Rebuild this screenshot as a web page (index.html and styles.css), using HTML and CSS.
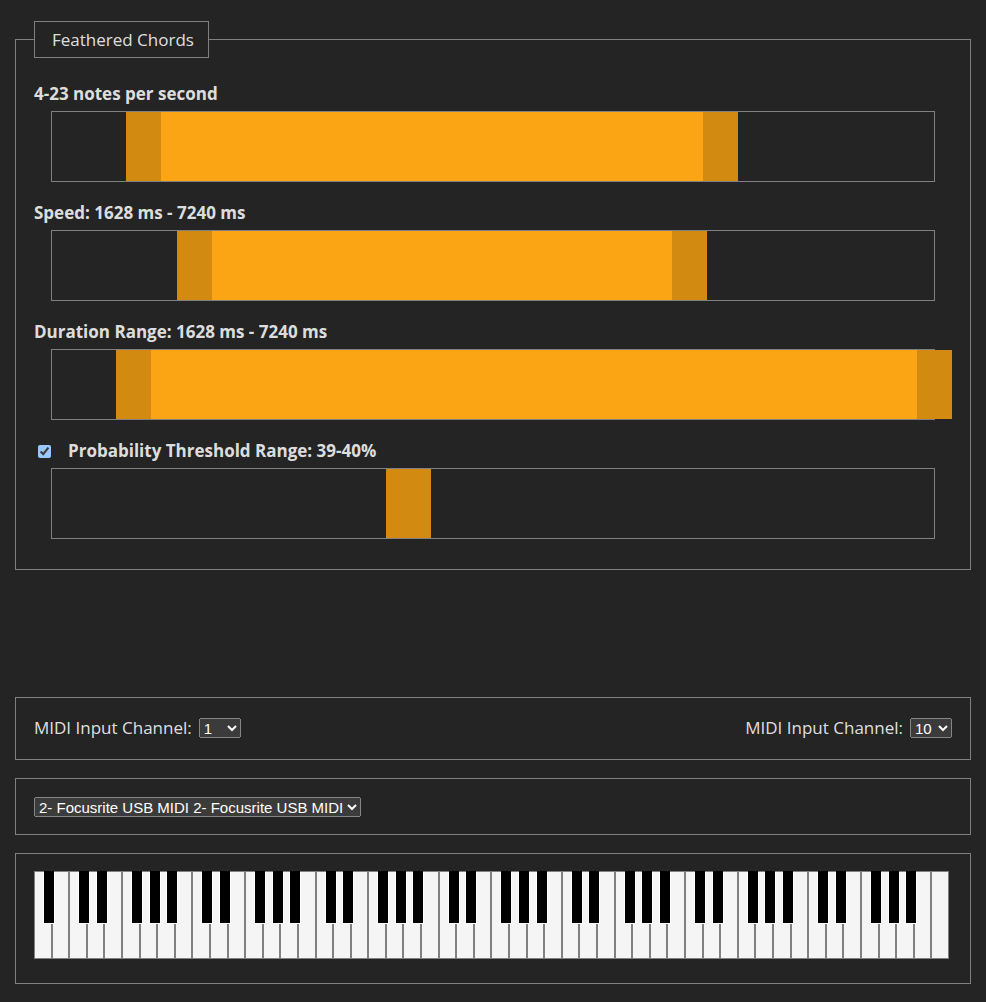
FILE: index.html
```html
<!DOCTYPE html>
<html lang="en">
<head>
<meta charset="utf-8">
<title>Feathered Chords</title>
<link rel="stylesheet" href="styles.css">
</head>
<body>
<main class="app">
  <fieldset class="panel chords">
    <legend class="chords-title">Feathered Chords</legend>

    <section class="control">
      <h2 class="control-label">4-23 notes per second</h2>
      <div class="track">
        <div class="range">
          <div class="fill" style="left: 8.3%; width: 67.9%"></div>
          <input class="thumb" type="range" aria-label="Minimum notes per second" min="0" max="1000" value="86">
          <input class="thumb" type="range" aria-label="Maximum notes per second" min="0" max="1000" value="753">
        </div>
      </div>
    </section>

    <section class="control">
      <h2 class="control-label">Speed: 1628 ms - 7240 ms</h2>
      <div class="track">
        <div class="range">
          <div class="fill" style="left: 14%; width: 58.8%"></div>
          <input class="thumb" type="range" aria-label="Minimum speed" min="0" max="1000" value="145">
          <input class="thumb" type="range" aria-label="Maximum speed" min="0" max="1000" value="717">
        </div>
      </div>
    </section>

    <section class="control">
      <h2 class="control-label">Duration Range: 1628 ms - 7240 ms</h2>
      <div class="track">
        <div class="range">
          <div class="fill" style="left: 7.2%; width: 92.7%"></div>
          <input class="thumb" type="range" aria-label="Minimum duration" min="0" max="1000" value="74">
          <input class="thumb" type="range" aria-label="Maximum duration" min="0" max="1000" value="1000">
        </div>
      </div>
    </section>

    <section class="control">
      <h2 class="control-label">
        <input class="toggle" type="checkbox" id="probability" checked>
        <label for="probability">Probability Threshold Range: 39-40%</label>
      </h2>
      <div class="track">
        <div class="range">
          <div class="fill" style="left: 37.2%; width: 4.8%"></div>
          <input class="thumb" type="range" aria-label="Minimum probability" min="0" max="1000" value="386">
          <input class="thumb" type="range" aria-label="Maximum probability" min="0" max="1000" value="398">
        </div>
      </div>
    </section>
  </fieldset>

  <section class="panel channels">
    <div class="channel">
      <label for="channel-a">MIDI Input Channel:</label>
      <select class="select channel-select" id="channel-a"><option>1</option><option>10</option></select>
    </div>
    <div class="channel">
      <label for="channel-b">MIDI Input Channel:</label>
      <select class="select channel-select" id="channel-b"><option>1</option><option selected>10</option></select>
    </div>
  </section>

  <section class="panel device">
    <select class="select" aria-label="MIDI device"><option>2- Focusrite USB MIDI 2- Focusrite USB MIDI</option></select>
  </section>

  <section class="panel piano">
    <div class="keyboard" id="keyboard"></div>
  </section>
</main>
<script src="keyboard.js"></script>
</body>
</html>
```

FILE: styles.css
```css
* {
  box-sizing: border-box;
}

:root {
  color-scheme: dark;
  --line: #808080;
}

body {
  margin: 0;
  background: #242424;
  color: rgba(255, 255, 255, 0.87);
  font-family: "Segoe UI", "Open Sans", "Noto Sans", sans-serif;
  font-size: 17px;
  line-height: 24px;
}

.app {
  display: flex;
  flex-direction: column;
  gap: 18px;
  padding: 21px 15px 18px;
}

.panel {
  margin: 0;
  border: 1px solid var(--line);
  padding: 17px 18px;
}

.chords {
  min-width: 0;
  margin-bottom: 109px;
  padding: 24px 18px 30px;
}

.chords-title {
  border: 1px solid var(--line);
  padding: 6px 14px 5px 17px;
}

.control + .control {
  margin-top: 19px;
}

.control-label {
  display: flex;
  align-items: center;
  margin: 0 0 5px;
  font-size: 17px;
  font-weight: 700;
}

.toggle {
  width: 13px;
  height: 13px;
  margin: 0 17px 0 4px;
}

.track {
  height: 71px;
  margin: 0 17px;
  border: 1px solid var(--line);
}

.range {
  position: relative;
  height: 100%;
  margin-right: -18px;
}

.fill {
  position: absolute;
  top: 0;
  bottom: 0;
  background: #fca514;
}

.thumb {
  position: absolute;
  inset: 0;
  width: 100%;
  height: 100%;
  margin: 0;
  appearance: none;
  background: transparent;
  pointer-events: none;
}

.thumb::-webkit-slider-runnable-track {
  height: 100%;
}

.thumb::-webkit-slider-thumb {
  appearance: none;
  width: 35px;
  height: 100%;
  border: 0;
  border-radius: 0;
  background: #d28b10;
  cursor: ew-resize;
  pointer-events: auto;
}

.channels {
  display: flex;
  justify-content: space-between;
  padding: 18px 18px 19px;
}

.channel {
  display: flex;
  align-items: center;
  gap: 7px;
}

.select {
  height: 20px;
  font-family: Arial, "Liberation Sans", sans-serif;
  font-size: 15px;
}

.channel-select {
  width: 42px;
}

.device {
  display: flex;
  padding: 18px 18px 17px;
}

.piano {
  padding: 17px 21px 24px 18px;
}

.keyboard {
  display: flex;
  height: 88px;
}

.key {
  position: relative;
  flex: 1;
  min-width: 0;
  border: 1px solid var(--line);
  padding: 0;
  background: #f5f5f5;
}

.sharp::after {
  content: "";
  position: absolute;
  z-index: 1;
  top: -1px;
  left: 9px;
  width: 10px;
  height: 52px;
  background: #000;
  box-shadow: -1px 1px #fff, 1px 1px #fff;
}
```

FILE: keyboard.js
```js
// 88-key piano: 52 white keys from A0 to C8, sharps drawn on the key below them
const keyboard = document.getElementById("keyboard");
const notes = "ABCDEFG";

for (let i = 0; i < 52; i++) {
  const note = notes[i % 7];
  const key = document.createElement("button");
  key.type = "button";
  key.className = "ACDFG".includes(note) && i < 51 ? "key sharp" : "key";
  key.setAttribute("aria-label", note);
  keyboard.append(key);
}
```
